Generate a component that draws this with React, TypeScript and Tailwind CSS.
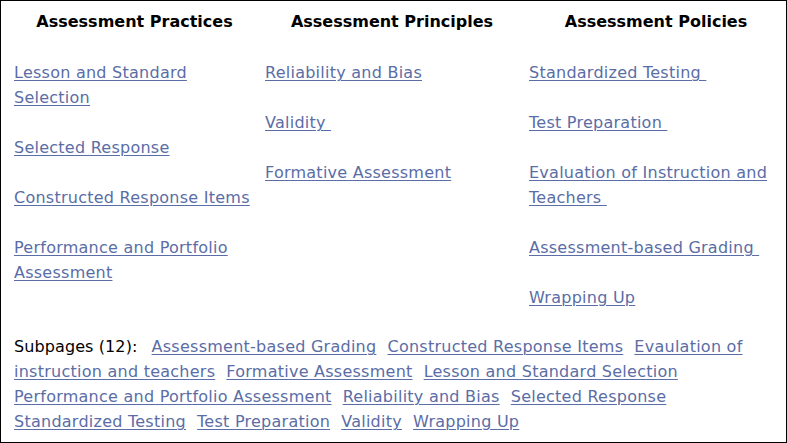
import React from "react";

const linkCls = "text-[#5a6da6] underline decoration-1 underline-offset-2 tracking-[0.25px]";

function Col({ title, items }: { title: string; items: string[] }) {
  return (
    <div>
      <h2 className="text-center font-bold text-[16px] leading-[25px] text-black mb-[26px]">{title}</h2>
      {items.map((t) => (
        <p key={t} className="mb-[25px] leading-[25px]">
          <a href="#" className={linkCls}>{t}</a>
        </p>
      ))}
    </div>
  );
}

const subpages = [
  "Assessment-based Grading",
  "Constructed Response Items",
  "Evaulation of instruction and teachers",
  "Formative Assessment",
  "Lesson and Standard Selection",
  "Performance and Portfolio Assessment",
  "Reliability and Bias",
  "Selected Response",
  "Standardized Testing",
  "Test Preparation",
  "Validity",
  "Wrapping Up",
];

export default function App() {
  return (
    <div
      className="w-[787px] h-[443px] bg-white border border-black pl-[13px] pr-[13px] pt-[8px] text-[16px] text-black"
      style={{ fontFamily: '"DejaVu Sans", Verdana, sans-serif' }}
    >
      <div className="grid grid-cols-[241px_254px_254px] gap-x-[10px]">
        <Col
          title="Assessment Practices"
          items={[
            "Lesson and Standard Selection",
            "Selected Response",
            "Constructed Response Items",
            "Performance and Portfolio Assessment",
          ]}
        />
        <Col
          title="Assessment Principles"
          items={["Reliability and Bias", "Validity\u00a0", "Formative Assessment"]}
        />
        <Col
          title="Assessment Policies"
          items={[
            "Standardized Testing\u00a0",
            "Test Preparation\u00a0",
            "Evaluation of Instruction and Teachers\u00a0",
            "Assessment-based Grading\u00a0",
            "Wrapping Up",
          ]}
        />
      </div>
      <p className="leading-[25px] pr-[2px] -mt-px">
        <span className="mr-[9px] tracking-[0.1px]">Subpages (12):</span>{" "}
        {subpages.map((s) => (
          <React.Fragment key={s}>
            <a href="#" className={`${linkCls} mr-[6px]`}>{s}</a>{" "}
          </React.Fragment>
        ))}
      </p>
    </div>
  );
}
